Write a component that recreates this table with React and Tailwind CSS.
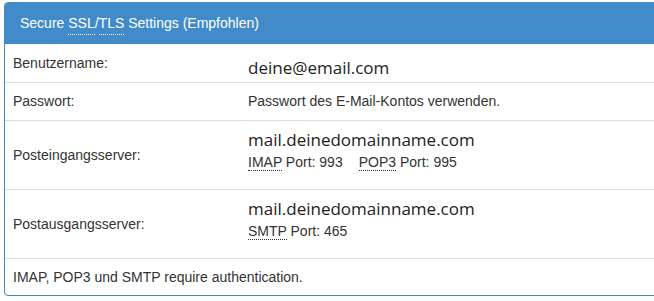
import React from 'react'

const Abbr = ({ children, title }) => (
    <abbr title={title} className='no-underline border-b border-dotted border-[#333] cursor-help'>{children}</abbr>
)

const Row = ({ label, children, tall }) => (
    <div className={`flex border-t border-[#ddd] ${tall ? 'h-[69px]' : 'h-[38px]'}`}>
        <div className='w-[243px] shrink-0 pl-2 flex items-center text-[14px]'>{label}</div>
        <div className='flex flex-col justify-center'>{children}</div>
    </div>
)

const Big = ({ children }) => (
    <div className="text-[17px] leading-[24px] text-[#222] font-['Open_Sans',sans-serif]">{children}</div>
)

export default function App() {
    return (
        <div className="w-[654px] h-[301px] overflow-hidden bg-white pt-[2px] pl-1 font-['Liberation_Sans',sans-serif] text-[#333]">
            <div className='w-[720px] border border-[#428bca] rounded-[4px] overflow-hidden'>
                <div className='bg-[#428bca] text-white text-[14px] h-[41px] flex items-center pl-[15px]'>
                    Secure&nbsp;<abbr title='Secure Sockets Layer' className='no-underline border-b border-dotted border-white'>SSL</abbr>/<abbr title='Transport Layer Security' className='no-underline border-b border-dotted border-white'>TLS</abbr>&nbsp;Settings (Empfohlen)
                </div>
                <div className='flex h-[38px]'>
                    <div className='w-[243px] shrink-0 pl-2 flex items-center text-[14px]'>Benutzername:</div>
                    <div className='flex items-center pt-[10px]'><Big>deine@email.com</Big></div>
                </div>
                <Row label='Passwort:'>
                    <div className='text-[14px]'>Passwort des E-Mail-Kontos verwenden.</div>
                </Row>
                <Row label='Posteingangsserver:' tall>
                    <div className='-mt-[10px]'>
                        <Big>mail.deinedomainname.com</Big>
                        <div className='text-[14px] leading-[20px]'>
                            <Abbr title='Internet Message Access Protocol'>IMAP</Abbr> Port: 993<span className='inline-block w-[16px]'></span><Abbr title='Post Office Protocol'>POP3</Abbr> Port: 995
                        </div>
                    </div>
                </Row>
                <Row label='Postausgangsserver:' tall>
                    <div className='-mt-[10px]'>
                        <Big>mail.deinedomainname.com</Big>
                        <div className='text-[14px] leading-[20px]'>
                            <Abbr title='Simple Mail Transfer Protocol'>SMTP</Abbr> Port: 465
                        </div>
                    </div>
                </Row>
                <div className='border-t border-[#ddd] h-[37px] flex items-center pl-2 text-[14px]'>
                    IMAP, POP3 und SMTP require authentication.
                </div>
            </div>
        </div>
    )
}
